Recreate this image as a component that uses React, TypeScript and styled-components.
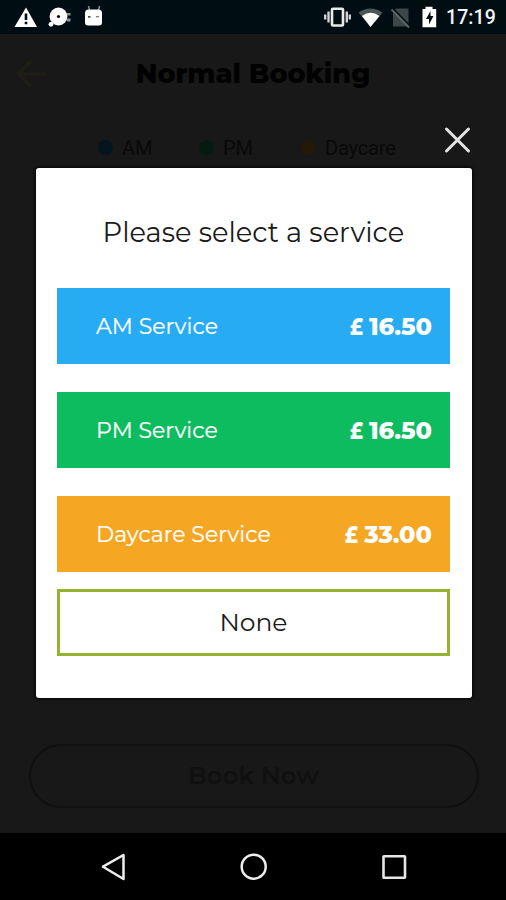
import React from "react";
import styled, { createGlobalStyle } from "styled-components";

const Global = createGlobalStyle`
  * { box-sizing: border-box; }
  body { margin: 0; background: #181818; }
  button { padding: 0; border: 0; background: none; font: inherit; color: inherit; }
`;

const Screen = styled.div`
  position: relative;
  width: 506px;
  height: 900px;
  display: flex;
  flex-direction: column;
  overflow: hidden;
  background: #181818;
  font-family: Montserrat, Inter, sans-serif;
`;

const StatusBar = styled.header`
  height: 34px;
  flex: none;
  display: flex;
  justify-content: space-between;
  background: #000d13;
  color: #fff;
`;

const StatusIcons = styled.svg`
  display: block;
  flex: none;
`;

const StatusRight = styled.div`
  display: flex;
`;

const Clock = styled.time`
  width: 60px;
  font: 500 19.5px/36px Roboto, sans-serif;
  letter-spacing: 0.1px;
  color: #f2f4f5;
`;

const Page = styled.main`
  flex: 1;
  display: flex;
  flex-direction: column;
`;

const TitleBar = styled.div`
  height: 80px;
  display: grid;
  grid-template-columns: 62px 1fr 62px;
  align-items: center;
`;

const BackButton = styled.button`
  display: flex;
  padding-left: 16px;
`;

const Title = styled.h1`
  margin: 0;
  text-align: center;
  font-size: 27px;
  font-weight: 800;
  line-height: 32px;
  color: #020202;
`;

const Legend = styled.div`
  display: flex;
  height: 28px;
  margin: 20px 0 0 98px;
  align-items: center;
`;

const LegendItem = styled.div<{ $width: number; $dot: string }>`
  width: ${(p) => p.$width}px;
  display: flex;
  align-items: center;
  gap: 9px;
  white-space: nowrap;
  font: 400 20px/28px Roboto, sans-serif;
  letter-spacing: -0.15px;
  color: #090909;

  &::before {
    content: "";
    width: 15px;
    height: 15px;
    margin-bottom: 2px;
    border-radius: 50%;
    background: ${(p) => p.$dot};
  }
`;

const BookButton = styled.button`
  height: 64px;
  margin: auto 27.5px 25px 28.5px;
  padding-bottom: 2px;
  border: 2px solid #101010;
  border-radius: 32px;
  font-size: 24.6px;
  font-weight: 600;
  color: #101010;
`;

const NavBar = styled.nav`
  height: 67px;
  flex: none;
  display: flex;
  justify-content: space-between;
  align-items: center;
  padding: 0 97px 0 98px;
  background: #000;
`;

const NavButton = styled.button`
  display: flex;
`;

const DialogLayer = styled.div`
  position: absolute;
  inset: 34px 0 67px;
  display: flex;
  flex-direction: column;
  align-items: flex-end;
  padding: 90px 34.5px 0 35.5px;
`;

const CloseButton = styled.button`
  display: flex;
  margin-bottom: 11.5px;
  margin-right: -1px;
`;

const Dialog = styled.section`
  width: 100%;
  height: 530.5px;
  padding: 49.5px 21.2px 0 21px;
  border-radius: 3px;
  background: #fff;
  box-shadow: 0 0 3px 1px #050505;
`;

const DialogTitle = styled.h2`
  margin: 0 0 39.4px;
  text-align: center;
  font-size: 27.3px;
  font-weight: 400;
  line-height: 32px;
  white-space: nowrap;
  color: #1b1b1b;
`;

const Services = styled.div`
  display: grid;
  gap: 28.5px;
`;

const ServiceButton = styled.button<{ $color: string }>`
  width: 100%;
  height: 75.5px;
  display: flex;
  justify-content: space-between;
  align-items: center;
  padding: 0 18.5px 0 39.6px;
  background: ${(p) => p.$color};
  color: #fff;
`;

const ServiceName = styled.span`
  padding-top: 1px;
  font-size: 22px;
  -webkit-text-stroke: 0.2px #fff;
`;

const Price = styled.span`
  display: flex;
  font-size: 24px;
  font-weight: 800;
  letter-spacing: -0.1px;
`;

const Currency = styled.span`
  width: 19px;
  text-align: left;
  transform: scaleX(0.8);
  transform-origin: left;
`;

const NoneButton = styled.button`
  width: 100%;
  height: 67px;
  margin-top: 17px;
  border: 3px solid #94b42f;
  font-size: 25px;
  color: #1b1b1b;
`;

const services = [
  { name: "AM Service", price: "16.50", color: "#27abf2" },
  { name: "PM Service", price: "16.50", color: "#0ebc60" },
  { name: "Daycare Service", price: "33.00", color: "#f5a623" },
];

export default function App() {
  return (
    <Screen>
      <Global />
      <StatusBar>
        <StatusIcons width="110" height="34" viewBox="0 0 110 34" fill="#fff">
          <path d="M26 7.500 37 27H14.500Z" />
          <path d="M24.700 13.500h2.600v6.500h-2.600zM24.700 21.700h2.600v2.600h-2.600z" fill="#000d13" />
          <circle cx="58.500" cy="16.500" r="8.900" />
          <circle cx="58.500" cy="16.500" r="1.600" fill="#000d13" />
          <circle cx="51" cy="24.300" r="2.400" />
          <path d="M67 13h3.500v2.500H67zM67 18.500h3.500v3H67z" fill="#8b9295" />
          <path d="m88.500 6 1.500 6M99.500 6l-1.500 6" stroke="#858d90" strokeWidth="1.500" />
          <path d="M85 13q0-3.500 3.500-3.500h10q3.500 0 3.500 3.500v9.500q0 3-3 3H88q-3 0-3-3z" />
          <path d="M88 16h2.500v1.700H88zM96 16.200h3v1.100h-3z" fill="#4b5558" />
        </StatusIcons>
        <StatusRight>
          <StatusIcons width="126" height="34" viewBox="320 0 126 34" fill="#fff">
            <rect x="332" y="8.700" width="11" height="16.800" rx="1" fill="none" stroke="#e8ebec" strokeWidth="2.600" />
            <path d="M328.500 11.500v11M346.800 11.500v11M325.200 14.500v5M349.800 14.500v5" stroke="#d5d9da" strokeWidth="2.300" />
            <path d="M358.500 12.500Q370.500 4.500 382.500 12.500L370.500 27Z" fill="#4c5659" />
            <path d="M362 16Q370.500 9.500 379.500 16L370.500 27Z" />
            <path d="m396 8.500h12.500v18H393V12z" fill="#3d4649" />
            <path d="m392.500 8 17.500 18" stroke="#000d13" strokeWidth="1.600" />
            <path d="m391.500 9.500 17.500 18" stroke="#5b6467" strokeWidth="1.800" />
            <path d="M422.500 9h3V6.800h7V9h3.700v18.200h-13.700z" />
            <path d="m430.500 11-4.500 8h3v5.500l4.500-8.500h-3z" fill="#000d13" />
          </StatusIcons>
          <Clock>17:19</Clock>
        </StatusRight>
      </StatusBar>

      <Page>
        <TitleBar>
          <BackButton aria-label="Back">
            <svg width="32" height="30" viewBox="0 0 32 30" fill="none" stroke="#1e1e15" strokeWidth="3.600">
              <path d="M30 15H3M15 2 2.500 15l12.500 13" />
            </svg>
          </BackButton>
          <Title>Normal Booking</Title>
        </TitleBar>
        <Legend>
          <LegendItem $width={101} $dot="#051520">AM</LegendItem>
          <LegendItem $width={102} $dot="#051b11">PM</LegendItem>
          <LegendItem $width={110} $dot="#241806">Daycare</LegendItem>
        </Legend>
        <BookButton>Book Now</BookButton>
      </Page>

      <NavBar>
        <NavButton aria-label="Back">
          <svg width="30" height="30" viewBox="0 0 30 30" fill="none" stroke="#eee" strokeWidth="2.500" strokeLinejoin="round">
            <path d="M25.500 3v24L5 14.700Z" />
          </svg>
        </NavButton>
        <NavButton aria-label="Home">
          <svg width="30" height="30" viewBox="0 0 30 30" fill="none" stroke="#eee" strokeWidth="2.500">
            <circle cx="14.700" cy="14.700" r="12" />
          </svg>
        </NavButton>
        <NavButton aria-label="Recent apps">
          <svg width="30" height="30" viewBox="0 0 30 30" fill="none" stroke="#e6e6e6" strokeWidth="2.600">
            <rect x="4.500" y="4.300" width="21.500" height="21.500" rx="0.500" />
          </svg>
        </NavButton>
      </NavBar>

      <DialogLayer>
        <CloseButton aria-label="Close">
          <svg width="30" height="32" viewBox="0 0 30 32" stroke="#e4e4e4" strokeWidth="3" strokeLinecap="round">
            <path d="m3.500 5 22 22M25.500 5l-22 22" />
          </svg>
        </CloseButton>
        <Dialog role="dialog">
          <DialogTitle>Please select a service</DialogTitle>
          <Services>
            {services.map((s) => (
              <ServiceButton key={s.name} $color={s.color}>
                <ServiceName>{s.name}</ServiceName>
                <Price>
                  <Currency>£</Currency>
                  {s.price}
                </Price>
              </ServiceButton>
            ))}
          </Services>
          <NoneButton>None</NoneButton>
        </Dialog>
      </DialogLayer>
    </Screen>
  );
}
